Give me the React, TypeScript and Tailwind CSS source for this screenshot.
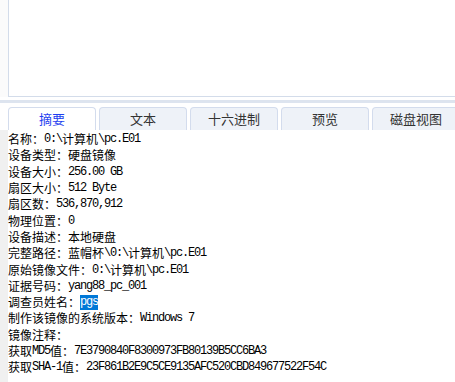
import type { ReactElement } from "react";

const tabs = ["摘要", "文本", "十六进制", "预览", "磁盘视图"];

const lines: { label: string; value: string; selected?: boolean }[] = [
  { label: "名称：", value: "0:\\计算机\\pc.E01" },
  { label: "设备类型：", value: "硬盘镜像" },
  { label: "设备大小：", value: "256.00 GB" },
  { label: "扇区大小：", value: "512 Byte" },
  { label: "扇区数：", value: "536,870,912" },
  { label: "物理位置：", value: "0" },
  { label: "设备描述：", value: "本地硬盘" },
  { label: "完整路径：", value: "蓝帽杯\\0:\\计算机\\pc.E01" },
  { label: "原始镜像文件：", value: "0:\\计算机\\pc.E01" },
  { label: "证据号码：", value: "yang88_pc_001" },
  { label: "调查员姓名：", value: "pgs", selected: true },
  { label: "制作该镜像的系统版本：", value: "Windows 7" },
  { label: "镜像注释：", value: "" },
  { label: "获取MD5值：", value: "7E3790840F8300973FB80139B5CC6BA3" },
  { label: "获取SHA-1值：", value: "23F861B2E9C5CE9135AFC520CBD849677522F54C" },
];

// ascii runs get a narrow mono face, CJK runs the CJK face
function Mixed({ text }: { text: string }): ReactElement {
  const parts = text.match(/[\x00-\x7f]+|[^\x00-\x7f]+/g) ?? [];
  return (
    <>
      {parts.map((p, i) =>
        /^[\x00-\x7f]/.test(p) ? (
          <span key={i} className="whitespace-pre font-['Liberation_Mono'] text-[12px] leading-none tracking-[-1.2px]">
            {p}
          </span>
        ) : (
          <span key={i} className="leading-none">
            {p}
          </span>
        ),
      )}
    </>
  );
}

export default function App(): ReactElement {
  return (
    <div className="flex h-[382px] w-[455px] flex-col overflow-hidden bg-white font-['Noto_Sans_CJK_SC',sans-serif]">
      <div className="flex h-[97px] shrink-0">
        <div className="w-2 shrink-0 bg-[#fbfbfb]" />
        <div className="flex-1 border-b border-l border-[#d3dcea] bg-white" />
      </div>
      <div className="mt-[3px] h-[3px] shrink-0 bg-[#dde4ef]" />
      <div className="mt-[4px] flex shrink-0 gap-[3px] pl-2">
        {tabs.map((t, i) => (
          <div
            key={t}
            className={
              i === 0
                ? "flex h-[23px] w-[88px] shrink-0 items-center justify-center rounded-t-[4px] border border-b-0 border-[#d3dced] bg-white text-[13px] text-[#1f3ff0]"
                : "flex h-[23px] w-[88px] shrink-0 items-center justify-center rounded-t-[4px] border border-b-0 border-[#d3dced] bg-[#eef2f8] text-[13px] text-[#333333]"
            }
          >
            {t}
          </div>
        ))}
      </div>
      <div className="flex flex-1">
        <div className="w-2 shrink-0 bg-[#f0f0f0]" />
        <div className="flex-1 bg-white pt-[1px] text-[12px] text-black">
          {lines.map((l) => (
            <div key={l.label} className="flex h-[16.3px] items-center whitespace-nowrap">
              <Mixed text={l.label} />
              {l.selected === true ? (
                <span className="flex h-[15px] items-center bg-[#0078d7] text-white">
                  <Mixed text={l.value} />
                </span>
              ) : (
                <Mixed text={l.value} />
              )}
            </div>
          ))}
        </div>
      </div>
    </div>
  );
}
